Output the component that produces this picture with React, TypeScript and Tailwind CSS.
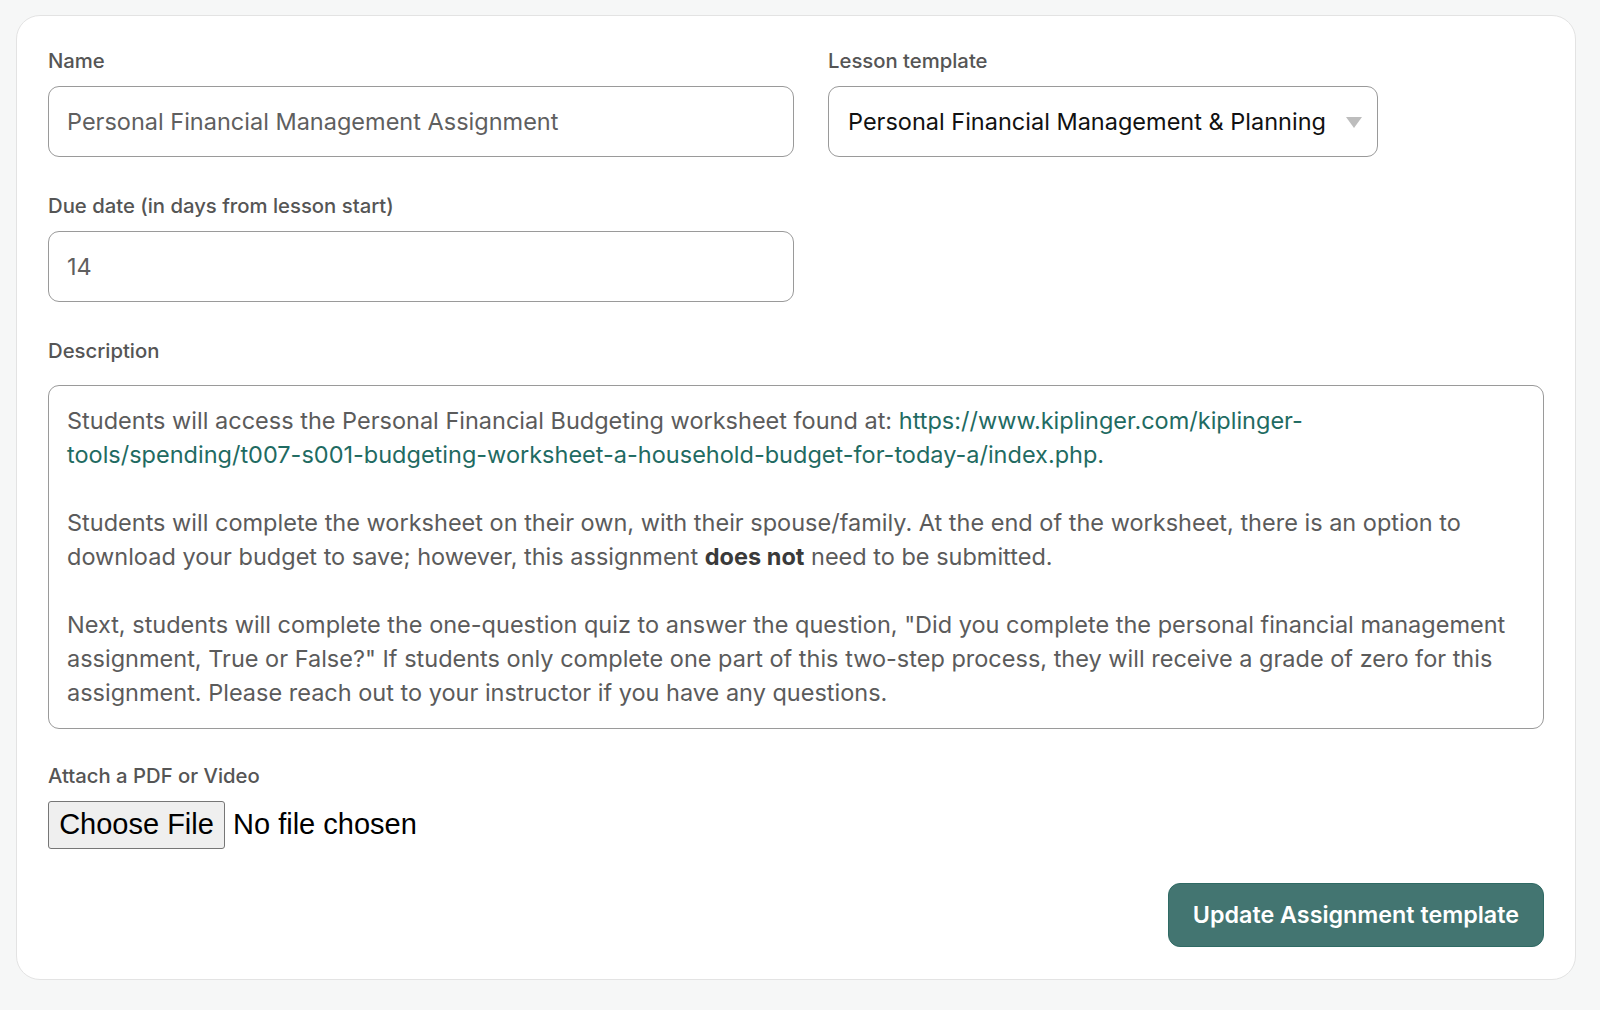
const FONT = "font-['Inter','Noto_Sans',sans-serif]"

function Label({ children }: { children: React.ReactNode }) {
  return (
    <label className="block text-[20.3px] leading-[26px] font-medium text-[#555] mb-[12px]">
      {children}
    </label>
  )
}

export default function App() {
  return (
    <div className={`min-h-[1010px] bg-[#f6f7f7] pt-[15px] pl-[16px] ${FONT}`}>
      <div className="w-[1560px] bg-white border border-[#e3e3e3] rounded-[24px] px-[31px] pt-[32px] pb-[32px]">
        <div className="flex gap-[34px]">
          <div className="w-[746px]">
            <Label>Name</Label>
            <input
              type="text"
              defaultValue="Personal Financial Management Assignment"
              className="w-full h-[71px] border border-[#9a9a9a] rounded-[11px] px-[18px] text-[23.5px] text-[#5f5f5f] outline-none"
            />
          </div>
          <div className="w-[550px]">
            <Label>Lesson template</Label>
            <div className="relative h-[71px] border border-[#9a9a9a] rounded-[11px] pl-[19px] pr-[44px] flex items-center text-[23.5px] text-[#111]">
              <span className="whitespace-nowrap">Personal Financial Management &amp; Planning</span>
              <svg className="absolute right-[15px] top-[30px]" width="16" height="11" viewBox="0 0 16 11">
                <path d="M0 0 L16 0 L8 11 Z" fill="#bdbdbd" />
              </svg>
            </div>
          </div>
        </div>

        <div className="w-[746px] mt-[36px]">
          <Label>Due date (in days from lesson start)</Label>
          <input
            type="text"
            defaultValue="14"
            className="w-full h-[71px] border border-[#9a9a9a] rounded-[11px] px-[18px] text-[23.5px] text-[#5f5f5f] outline-none"
          />
        </div>

        <div className="mt-[36px]">
          <Label>Description</Label>
          <div className="mt-[21px] h-[344px] border border-[#9a9a9a] rounded-[11px] px-[18px] pt-[18px] text-[23.5px] leading-[34px] text-[#5b5b5b] whitespace-nowrap">
            <p>
              Students will access the Personal Financial Budgeting worksheet found at:{" "}
              <a className="text-[#1f6b62]">https://www.kiplinger.com/kiplinger-</a>
              <br />
              <a className="text-[#1f6b62]">tools/spending/t007-s001-budgeting-worksheet-a-household-budget-for-today-a/index.php.</a>
            </p>
            <p className="mt-[34px]">
              Students will complete the worksheet on their own, with their spouse/family. At the end of the worksheet, there is an option to
              <br />
              download your budget to save; however, this assignment <strong className="font-bold text-[#3a3a3a]">does not</strong> need to be submitted.
            </p>
            <p className="mt-[34px]">
              Next, students will complete the one-question quiz to answer the question, "Did you complete the personal financial management
              <br />
              assignment, True or False?" If students only complete one part of this two-step process, they will receive a grade of zero for this
              <br />
              assignment. Please reach out to your instructor if you have any questions.
            </p>
          </div>
        </div>

        <div className="mt-[34px]">
          <Label>Attach a PDF or Video</Label>
          <div className="flex items-center font-['Liberation_Sans',Arial,sans-serif] text-[29px] text-black">
            <button className="h-[48px] w-[177px] bg-[#efefef] border border-[#767676] rounded-[3px] text-center">
              Choose File
            </button>
            <span className="ml-[8px]">No file chosen</span>
          </div>
        </div>

        <div className="flex justify-end mt-[34px]">
          <button className="h-[64px] px-[24px] rounded-[12px] bg-[#437571] border border-[#2f6a64] text-white text-[23.3px] font-semibold">
            Update Assignment template
          </button>
        </div>
      </div>
    </div>
  )
}
